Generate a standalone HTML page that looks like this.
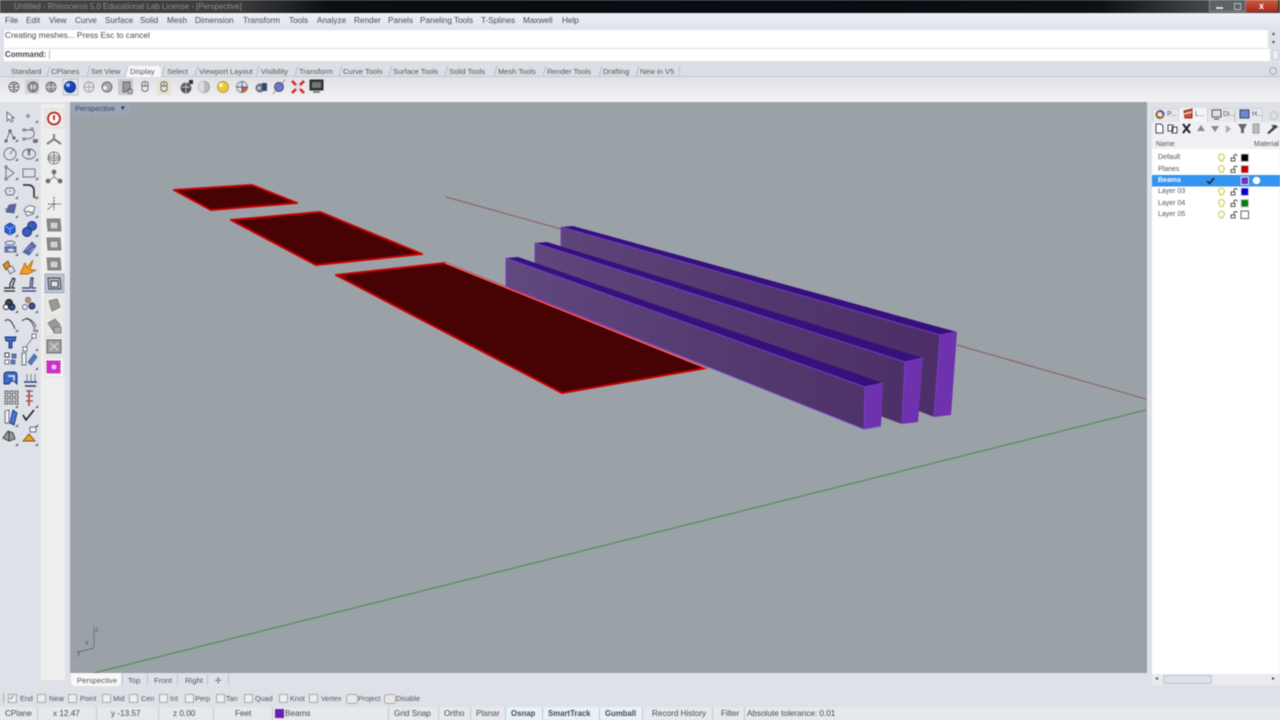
<!DOCTYPE html>
<html><head><meta charset="utf-8"><title>Rhinoceros</title>
<style>
html,body{margin:0;padding:0;width:1280px;height:720px;overflow:hidden;background:#dfe1e8}
#w{position:relative;width:1280px;height:720px;overflow:hidden;filter:blur(.45px);font-family:"Liberation Sans",sans-serif;font-size:8.2px;color:#4a4a4a;background:#dfe1e8}
#w div{position:absolute}
#w span{position:absolute;white-space:nowrap;line-height:11px}
#w .t span,#w span.t{font-size:7.5px;color:#555}
#w .o span{font-size:7.2px;color:#555}
#w .l span{font-size:7px;color:#555}
.d{width:1px;background:#c4c7ce;top:707px;height:13px}
.b{width:7px;height:7px;border:1px solid #a8a8a8;background:#eeeeee;top:694px}
.r{width:10px;height:8px;border:1px solid #a8a8a8;border-radius:3px;background:#e8e8e8;top:694px}
</style></head><body><div id="w">
<div style="left:0;top:0;width:1280px;height:13px;background:linear-gradient(90deg,#454545 0,#3c3c3c 240px,#0b0e12 330px,#080c12 800px,#0d1014 1100px,#55585c 1240px,#3a3a3a 1280px)"></div>
<span style="left:14px;top:1px;color:#8e8e8e;font-size:7.9px">Untitled - Rhinoceros 5.0 Educational Lab License - [Perspective]</span>
<div style="left:1209px;top:0;width:37px;height:12px;background:#5c6166;border:1px solid #8a8a8a;border-top:0;box-sizing:border-box"></div>
<div style="left:1246px;top:0;width:32px;height:12px;background:linear-gradient(#c85a40,#a82a1e)"></div>
<div style="left:1216px;top:7px;width:7px;height:2px;background:#ddd"></div>
<div style="left:1234px;top:3px;width:5px;height:5px;border:1px solid #bbb"></div>
<span style="left:1259px;top:1px;color:#fff;font-weight:bold;font-size:9px">x</span>

<div style="left:0;top:13px;width:1280px;height:17px;background:linear-gradient(#eef0f6,#dde1ec)"></div>
<span style="left:5px;top:15px">File</span><span style="left:26px;top:15px">Edit</span><span style="left:49px;top:15px">View</span><span style="left:75px;top:15px">Curve</span><span style="left:105px;top:15px">Surface</span><span style="left:140px;top:15px">Solid</span><span style="left:167px;top:15px">Mesh</span><span style="left:195px;top:15px">Dimension</span><span style="left:243px;top:15px">Transform</span><span style="left:289px;top:15px">Tools</span><span style="left:317px;top:15px">Analyze</span><span style="left:354px;top:15px">Render</span><span style="left:388px;top:15px">Panels</span><span style="left:420px;top:15px">Paneling Tools</span><span style="left:481px;top:15px">T-Splines</span><span style="left:523px;top:15px">Maxwell</span><span style="left:562px;top:15px">Help</span>

<div style="left:4px;top:30px;width:1264px;height:18px;background:#fff"></div>
<div style="left:4px;top:49px;width:1266px;height:12px;background:#fff"></div>
<span style="left:5px;top:30px;font-size:8.3px">Creating meshes... Press Esc to cancel</span>
<span style="left:5px;top:49px;font-weight:bold;color:#444;font-size:7.9px">Command:</span>
<div style="left:49px;top:50px;width:1px;height:9px;background:#bbb"></div>
<span style="left:1272px;top:29px;font-size:6px">▴</span><span style="left:1272px;top:38px;font-size:6px">▾</span>
<div style="left:1272px;top:50px;width:7px;height:10px;background:#eef0f6;border:1px solid #c8ccd4;box-sizing:border-box"></div>

<div style="left:0;top:63px;width:1280px;height:14px;background:#dcdee5;border-bottom:1px solid #c4c6cc;box-sizing:border-box"></div>
<div style="left:126px;top:66px;width:35px;height:11px;background:#f6f7fa;border-radius:3px 3px 0 0"></div>
<div class="t"><span style="left:11px;top:66px">Standard</span><span style="left:51px;top:66px">CPlanes</span><span style="left:91px;top:66px">Set View</span><span style="left:130px;top:66px">Display</span><span style="left:167px;top:66px">Select</span><span style="left:199px;top:66px">Viewport Layout</span><span style="left:261px;top:66px">Visibility</span><span style="left:299px;top:66px">Transform</span><span style="left:343px;top:66px">Curve Tools</span><span style="left:393px;top:66px">Surface Tools</span><span style="left:449px;top:66px">Solid Tools</span><span style="left:498px;top:66px">Mesh Tools</span><span style="left:547px;top:66px">Render Tools</span><span style="left:603px;top:66px">Drafting</span><span style="left:640px;top:66px">New in V5</span></div>
<div style="left:679px;top:66px;width:1px;height:10px;background:#c0c3c9"></div>
<div style="left:1269px;top:67px;width:8px;height:8px;border:1px solid #aaa;border-radius:50%;box-sizing:border-box"></div>

<div style="left:0;top:77px;width:1280px;height:25px;background:linear-gradient(#dfe1e6,#f3f3f5)"></div>
<div style="left:0;top:102px;width:70px;height:605px;background:#dfe1e8"></div>
<div style="left:41px;top:104px;width:24px;height:576px;background:#eeefec"></div>
<div style="left:70px;top:102px;width:1077px;height:571px;background:#9aa1a7"></div>
<div style="left:70px;top:102px;width:60px;height:13px;background:#9ba5b5"></div>
<span style="left:75px;top:103px;color:#3d4a62;font-size:7.7px">Perspective</span>
<span style="left:121px;top:103px;color:#224;font-size:7px">▾</span>

<svg style="position:absolute;left:0;top:0" width="1280" height="720" viewBox="0 0 1280 720">
<g stroke="#b9bbc2" stroke-width="1" fill="none">
<path d="M47 76L50 66M87 76L90 66M125 76L128 66M162 76L165 66M195 76L198 66M256 76L259 66M295 76L298 66M339 76L342 66M389 76L392 66M445 76L448 66M494 76L497 66M543 76L546 66M599 76L602 66M636 76L639 66"/>
</g>
<g fill="none">
<path d="M446 197L561 229M957 345L1146 399" stroke="#8d5a5c" stroke-width="1"/>
<path d="M94 673L1146 410" stroke="#4f8f55" stroke-width="1.2"/>
<path d="M94 648V627M94 648L78 652" stroke="#6d7378"/>
</g>
<text x="95" y="632" font-size="7" fill="#5a5f64" font-family="Liberation Sans">z</text><text x="85" y="645" font-size="7" fill="#5a5f64" font-family="Liberation Sans">x</text><text x="77" y="655" font-size="7" fill="#5a5f64" font-family="Liberation Sans">y</text>

<g stroke="#c80000" stroke-width="2" fill="#470203" stroke-linejoin="round">
<polygon points="174,190 252,185 297,203 211,210"/>
<polygon points="231,220 320,212 422,254 316,265"/>
</g>
<defs>
<linearGradient id="g" gradientUnits="userSpaceOnUse" x1="506" y1="0" x2="940" y2="0"><stop offset="0" stop-color="#60497f"/><stop offset=".5" stop-color="#543a6e"/><stop offset="1" stop-color="#4d2e67"/></linearGradient>
</defs>
<!-- beam 3 -->
<polygon points="561,227 940,335 934,417 561,270" fill="url(#g)"/>
<polygon points="940,335 957,332 951,415 934,417" fill="#6f32ae"/>
<polygon points="561,227 573,226 957,332 940,335" fill="#37107c"/>
<path d="M561,227L940,335L957,332M561,227V250M940,335L934,417" stroke="#7240c8" fill="none"/>
<!-- beam 2 -->
<polygon points="535,243 905,362 902,424 535,290" fill="url(#g)"/>
<polygon points="905,362 923,358 918,422 902,424" fill="#6f32ae"/>
<polygon points="535,243 547,242 923,358 905,362" fill="#37107c"/>
<path d="M535,243L905,362L923,358M535,243V262M905,362L902,424" stroke="#7240c8" fill="none"/>
<!-- beam 1 -->
<polygon points="506,258 865,387 864,429 506,286" fill="url(#g)"/>
<polygon points="865,387 883,383 881,426 864,429" fill="#6f32ae"/>
<polygon points="506,258 518,257 883,383 865,387" fill="#37107c"/>
<path d="M506,258L865,387L883,383M506,258V286L864,429L881,426M865,387L864,429" stroke="#7240c8" fill="none"/>
<polygon points="336,275 445,263 706,368 562,393" fill="#470203" stroke="#c80000" stroke-width="2" stroke-linejoin="round"/>
<path d="M445,263L706,368" stroke="#e88a90" stroke-width="1"/>

<!-- top toolbar -->
<g stroke="#666" stroke-width=".9" fill="none">
<rect x="25" y="79" width="14" height="15" fill="#d0d2d6" stroke="none"/>
<rect x="63" y="79" width="15" height="16" fill="#dfe3ee" stroke="#999" stroke-dasharray="1 1"/>
<rect x="118" y="79" width="15" height="16" fill="#c6c8cc" stroke="none"/>
<rect x="157" y="79" width="14" height="16" fill="#e6e2d2" stroke="none"/>
<circle cx="14" cy="87" r="5"/><path d="M9 87H19M14 82V92M10.500 83.500Q14 86 17.500 83.500M10.500 90.500Q14 88 17.500 90.500"/>
<circle cx="33" cy="87" r="5" fill="#999"/><circle cx="33" cy="87" r="2.500" fill="#ddd" stroke="none"/><path d="M33 82V92"/>
<circle cx="51" cy="87" r="5" fill="#aaa"/><path d="M51 82V92"/><path d="M46 87H56" stroke="#ddd"/>
<circle cx="70" cy="87" r="5.500" fill="#1446b8" stroke="#0a2a80"/><circle cx="68" cy="85" r="2" fill="#9fc0f0" stroke="none"/>
<circle cx="89" cy="87" r="5" stroke="#999" fill="#e6e6e6"/><path d="M84 87H94M89 82V92" stroke="#aaa"/>
<circle cx="107" cy="87" r="5" fill="#aaa"/><circle cx="105" cy="88" r="2" fill="#eee" stroke="none"/>
<path d="M123 82H130V90L125 92H123Z" fill="#999"/><circle cx="130" cy="91" r="2.500"/>
<path d="M142 83Q145 80 148 83V90Q145 93 142 90ZM142 86H148M145 83V86"/>
<path d="M161 83Q164 80 167 83V90Q164 93 161 90ZM161 86H167M164 83V86"/>
<circle cx="186" cy="88" r="5" fill="#555"/><path d="M182 87H190M186 83V93" stroke="#ccc"/><rect x="189" y="80" width="4" height="4" fill="#333" stroke="none"/>
<circle cx="204" cy="87" r="5.500" fill="#bbb" stroke="#999"/><path d="M204 81.500A5.500 5.500 0 0 0 204 92.500Z" fill="#ddd" stroke="none"/>
<circle cx="223" cy="87" r="5.500" fill="#e8c840" stroke="#b89820"/><circle cx="221" cy="85" r="2" fill="#fff3b0" stroke="none"/>
<circle cx="242" cy="87" r="5.500" fill="#ddd" stroke="#888"/><path d="M242 87H247.500A5.500 5.500 0 0 1 242 92.500Z" fill="#dd5a2a" stroke="none"/><path d="M236 87H248M242 81V93" stroke="#4060a0"/>
<circle cx="260" cy="88" r="4" fill="#7080a0"/><rect x="262" y="83" width="5" height="8" fill="#39486a" stroke="none"/><circle cx="259" cy="88" r="1.500" fill="#ccd" stroke="none"/>
<path d="M273 94L285 80" stroke="#888"/><circle cx="279" cy="87" r="4.500" fill="#6a78c8" stroke="#445"/>
<path d="M292 81L304 93M304 81L292 93" stroke="#e02020" stroke-width="2.500"/><circle cx="298" cy="87" r="3" fill="#dcdcdc" stroke="none"/>
<rect x="310" y="80" width="13" height="10" fill="#333" stroke="#222"/><rect x="312" y="82" width="9" height="6" fill="#777" stroke="none"/><path d="M313 92H320" stroke="#666" stroke-width="1.500"/>
</g>

<!-- left column 1 -->
<g stroke="#5e6880" stroke-width=".9" fill="none">
<path d="M7 112L7 121L9.500 119L11 122L13 121L11.500 118L14 118Z" fill="#f4f4f4"/>
<circle cx="28" cy="116" r="1.300"/>
<path d="M6 141L10 131L14 138" /><rect x="5" y="140" width="2" height="2" fill="#555"/><rect x="9" y="130" width="2" height="2" fill="#555"/><rect x="13" y="137" width="2" height="2" fill="#555"/>
<path d="M24 130H31Q35 130 34 135Q33 139 24 139" /><rect x="23" y="129" width="2" height="2" fill="#fff"/><rect x="31" y="128" width="2" height="2" fill="#fff"/><rect x="23" y="138" width="2" height="2" fill="#fff"/><rect x="33" y="139" width="4" height="4" fill="#777" stroke="none"/>
<circle cx="10" cy="154" r="6"/><path d="M10 154L14 149"/>
<ellipse cx="29" cy="154" rx="6.500" ry="5"/><circle cx="29" cy="151" r="1" fill="#555"/><circle cx="29" cy="154" r="1"/>
<path d="M6 167L14 173L6 179Z"/><rect x="5" y="166" width="2" height="2" fill="#fff"/><rect x="5" y="178" width="2" height="2" fill="#fff"/>
<rect x="23" y="169" width="12" height="8"/>
<polygon points="7,188 13,188 15,191 13,195 7,195 5,191"/><path d="M9 191H11"/>
<path d="M23 185H28Q34 185 34 191V196" stroke="#222" stroke-width="1.500"/><rect x="33" y="196" width="3" height="2" fill="#a06030" stroke="none"/>
<path d="M6 212L9 205L16 204L14 213Z" fill="#5060c0"/><path d="M9 205L11 212M5 209H15"/>
<path d="M24 210Q28 203 35 207L33 214L27 216Z" fill="#f0f0f4"/><path d="M26 211L33 213" stroke="#333"/>
<path d="M5 226L10 223L15 226V232L10 235L5 232Z" fill="#2a5fd8" stroke="#1a3a90"/><path d="M5 226L10 229L15 226M10 229V235" stroke="#8fb0ee"/>
<circle cx="32" cy="226" r="4.500" fill="#3a5cc0" stroke="#1a2a70"/><circle cx="27" cy="232" r="4.500" fill="#3a5cc0" stroke="#1a2a70"/>
<ellipse cx="10" cy="243" rx="5" ry="2"/><path d="M5 246V252H16V246M7 247Q11 250 15 247" fill="#5878d8"/><ellipse cx="11" cy="250" rx="4" ry="2" fill="#d0d8f0"/>
<path d="M23 252L32 242L36 246L29 255Z" fill="#4a62b8"/><path d="M26 250L33 245M29 252L34 248" stroke="#99a8dc"/>
<path d="M3 265L8 261L10 266L6 270Z" fill="#d8951e" stroke="#7a5010"/><path d="M7 268L12 266L15 271L10 274Z" fill="#ddd"/>
<path d="M20 274L25 263L27 268L33 260L30 270L36 270L28 274Z" fill="#f0a020" stroke="#c06010"/>
<path d="M4 288H10V284L13 278L15 279L12 288H15M4 291H15" stroke="#222" stroke-width="1.200"/>
<path d="M22 288H30L31 278H33L32 288H36M22 291H36" stroke="#2a3a6a" stroke-width="1.200"/>
<circle cx="9" cy="303" r="3.500" fill="#444" stroke="#111"/><circle cx="6" cy="307" r="2.500" fill="#fff" stroke="#111"/><circle cx="12" cy="307" r="3" fill="#3050b0" stroke="#111"/>
<circle cx="28" cy="300" r="2.500" fill="#d89040"/><circle cx="25" cy="307" r="2.500" fill="#e8e8e8"/><circle cx="32" cy="306" r="3" fill="#3a50a0" stroke="#222"/>
<path d="M5 321Q10 316 15 329" stroke="#222"/>
<path d="M22 321Q30 314 35 330M26 318Q34 320 36 327" stroke="#444"/><rect x="33" y="329" width="3" height="3" fill="#999" stroke="none"/>
<path d="M5 337H16L15 341H12L12 348H9L9 341H6Z" fill="#3c6ac8" stroke="#183070"/>
<path d="M24 349L35 335" stroke="#777"/><rect x="23" y="347" width="4" height="4" fill="#fff"/><rect x="32" y="334" width="4" height="4" fill="#fff"/>
<rect x="5" y="353" width="4" height="4" fill="#fff" stroke="#333"/><rect x="11" y="360" width="4" height="4" fill="#4a78d0"/><rect x="5" y="360" width="4" height="4" fill="#fff"/><rect x="12" y="354" width="4" height="4" fill="#4a78d0"/>
<path d="M22 353V365H26V353Z" fill="#f0f0f0"/><path d="M28 362L34 354L37 357L31 365Z" fill="#4a78d0"/>
<path d="M4 384V375Q4 372 8 372H14Q17 372 17 375V384Q12 378 9 384Z" fill="#3c6ac8" stroke="#183070"/><path d="M8 376H14V381" stroke="#e8eaf8" stroke-width="1.500"/>
<path d="M24 382H37M25 386H36" stroke="#2a3a80" stroke-width="1.500"/><path d="M27 374V382M31 374V382M35 374V382" stroke="#777"/>
<g stroke="#555"><rect x="5" y="391" width="3" height="3"/><rect x="10" y="391" width="3" height="3"/><rect x="15" y="391" width="3" height="3"/><rect x="5" y="396" width="3" height="3"/><rect x="10" y="396" width="3" height="3"/><rect x="15" y="396" width="3" height="3"/><rect x="5" y="401" width="3" height="3"/><rect x="10" y="401" width="3" height="3"/><rect x="15" y="401" width="3" height="3"/></g>
<path d="M26 391H33M26 396H33M26 401H33" stroke="#777" stroke-width="1.500"/><path d="M29 390V406" stroke="#c83030" stroke-width="1.500"/>
<path d="M5 411L9 410V423L5 423Z" fill="#f0f0f0"/><path d="M10 423L13 410L17 413L14 425Z" fill="#4a78d0" stroke="#183070"/>
<path d="M23 415L26 420L34 410" stroke="#111" stroke-width="1.500"/>
<path d="M3 438L8 431L13 433L15 439L9 441Z" fill="#9a9a9a" stroke="#333"/><path d="M9 431V441" stroke="#333"/>
<path d="M23 441L29 434L35 441Z" fill="#e8a020" stroke="#805010"/><rect x="30" y="427" width="6" height="5" fill="#eee"/>
</g>
<g fill="#666">
<path d="M38 123h-3l3-3zM38 142h-3l3-3zM18 142h-3l3-3zM18 161h-3l3-3zM38 161h-3l3-3zM18 180h-3l3-3zM38 180h-3l3-3zM18 199h-3l3-3zM38 199h-3l3-3zM18 218h-3l3-3zM38 218h-3l3-3zM18 237h-3l3-3zM38 237h-3l3-3zM18 256h-3l3-3zM38 256h-3l3-3zM18 313h-3l3-3zM38 313h-3l3-3zM18 332h-3l3-3zM38 332h-3l3-3zM38 351h-3l3-3zM38 370h-3l3-3zM18 408h-3l3-3zM38 408h-3l3-3zM18 427h-3l3-3zM38 427h-3l3-3zM18 446h-3l3-3zM38 446h-3l3-3z"/>
</g>

<!-- left column 2 -->
<g fill="none" stroke="#808080">
<rect x="45" y="109" width="19" height="19" fill="#f3e8e6" stroke="#ddd"/>
<circle cx="54" cy="118.500" r="6" stroke="#b02a2a" stroke-width="1.800" fill="#fbf4f2"/><path d="M54 115V120" stroke="#b02a2a" stroke-width="1.800"/>
<path d="M54 139V134M54 139L47 144M54 139L61 144" stroke-width="2"/>
<circle cx="54" cy="158" r="6"/><ellipse cx="54" cy="158" rx="6" ry="2.500"/><path d="M48 158H60M54 152V164"/>
<path d="M54 177V172M54 177L48 181M54 177L60 181"/><circle cx="54" cy="172" r="2" fill="#666"/><circle cx="48" cy="181" r="2" fill="#666"/><circle cx="60" cy="181" r="2" fill="#666"/>
<path d="M54 197V210M48 204H61M54 204L47 210" stroke-dasharray="2 1" stroke="#555"/>
<path d="M47 219H60L61 231H48Z" fill="#8a8a8a"/><path d="M50 222H58V229H50Z" fill="#cfcfcf"/>
<path d="M47 238H60L61 250H48Z" fill="#8a8a8a"/><path d="M50 241H58V248H50Z" fill="#cfcfcf"/>
<path d="M47 258H60L61 270H48Z" fill="#8a8a8a"/><path d="M50 261H58V268H50Z" fill="#cfcfcf"/>
<rect x="45" y="274" width="19" height="19" fill="#b7c3d6" stroke="#aab"/>
<path d="M48 278H60L61 289H49Z" fill="#b0b8c0" stroke="#444"/><path d="M51 281H58V287H51Z" fill="#dde2e8" stroke="#444"/>
<rect x="45" y="296" width="19" height="19" fill="#e9e9e6" stroke="#ddd"/>
<path d="M49 301L57 299L60 307L52 311Z" fill="#9a9a9a"/>
<rect x="45" y="317" width="19" height="19" fill="#e9e9e6" stroke="#ddd"/>
<path d="M48 323L55 319L60 325L54 332Z" fill="#999"/><path d="M54 327H61V333H54Z" fill="#aaa"/>
<rect x="45" y="337" width="19" height="19" fill="#e9e9e6" stroke="#ddd"/>
<rect x="47" y="340" width="14" height="13" fill="#a0a0a0" stroke="#666"/><path d="M50 343L58 350M58 343L50 350" stroke="#ddd"/>
<rect x="45" y="358" width="19" height="19" fill="#f4f0f4" stroke="#ddd"/>
<path d="M47 361H60V373H47Z" fill="#d030c8" stroke="#a020a0" stroke-dasharray="2 1"/><circle cx="54" cy="367" r="2.500" fill="#f6c6f4" stroke="none"/>
</g>
</svg>

<!-- right panel -->
<div style="left:1147px;top:102px;width:133px;height:578px;background:#dfe1e8"></div>
<div style="left:1152px;top:137px;width:128px;height:537px;background:#fff"></div>
<div style="left:1152px;top:137px;width:128px;height:12px;background:#f0f1f3"></div>
<div style="left:1152px;top:108px;width:27px;height:14px;background:#e6e8ee;border:1px solid #cfd1d8;border-bottom:0;box-sizing:border-box;border-radius:3px 3px 0 0"></div>
<div style="left:1179px;top:108px;width:28px;height:14px;background:#f4f4f6;border-radius:3px 3px 0 0"></div>
<div style="left:1207px;top:108px;width:28px;height:14px;background:#e6e8ee;border:1px solid #cfd1d8;border-bottom:0;box-sizing:border-box;border-radius:3px 3px 0 0"></div>
<div style="left:1235px;top:108px;width:28px;height:14px;background:#e6e8ee;border:1px solid #cfd1d8;border-bottom:0;box-sizing:border-box;border-radius:3px 3px 0 0"></div>
<div style="left:1152px;top:122px;width:128px;height:15px;background:#eff0f4"></div>
<svg style="position:absolute;left:0;top:0" width="1280" height="720" viewBox="0 0 1280 720">
<g fill="none" stroke="#444">
<circle cx="1160" cy="114.500" r="3.500" stroke="#c05020" stroke-width="2"/><path d="M1160 111A3.500 3.500 0 0 1 1163.500 114.500" stroke="#3050c0" stroke-width="2"/><path d="M1157 116A3.500 3.500 0 0 0 1160 118" stroke="#2a9040" stroke-width="2"/>
<path d="M1184 111L1192 109V118L1185 118Z" fill="#d05030" stroke="#803020"/><path d="M1184 114L1192 112" stroke="#fff"/>
<rect x="1212" y="110" width="9" height="7" fill="#e0e0e0" stroke="#555"/><path d="M1214 119H1219"/>
<rect x="1240" y="110" width="9" height="8" fill="#6a8ad0" stroke="#345"/>
<circle cx="1274" cy="115.500" r="3.800" stroke="#bbb"/>
<path d="M1156 124H1161L1163 126V133H1156Z" fill="#fff"/>
<path d="M1168 125H1173V131H1168ZM1172 127H1177V133H1172Z" fill="#fff"/>
<path d="M1183 124L1190 133M1190 124L1183 133" stroke="#222" stroke-width="2"/>
<path d="M1197 131L1201 125L1205 131Z" fill="#888" stroke="none"/>
<path d="M1211 126L1215 132L1219 126Z" fill="#888" stroke="none"/>
<path d="M1231 129L1226 125V133Z" fill="#aaa" stroke="none"/>
<path d="M1238 124H1247L1244 129V133H1241V129Z" fill="#666" stroke="none"/>
<rect x="1253" y="124" width="6" height="9" fill="#bbb" stroke="#999"/>
<path d="M1267 133L1273 127L1271 125L1276 125L1278 127L1275 129L1269 134Z" fill="#444" stroke="none"/>
<rect x="1152" y="175" width="128" height="11.500" fill="#3494ee" stroke="none"/>
<g stroke="#c8c860" fill="#fdfde8">
<path d="M1221 154a3 3 0 0 1 2 5.500V161H1220V159.500a3 3 0 0 1 1-5.500Z"/>
<path d="M1221 165.500a3 3 0 0 1 2 5.500V172.500H1220V171a3 3 0 0 1 1-5.500Z"/>
<path d="M1221 188a3 3 0 0 1 2 5.500V195H1220V193.500a3 3 0 0 1 1-5.500Z"/>
<path d="M1221 199.500a3 3 0 0 1 2 5.500V206.500H1220V205a3 3 0 0 1 1-5.500Z"/>
<path d="M1221 211a3 3 0 0 1 2 5.500V218H1220V216.500a3 3 0 0 1 1-5.500Z"/>
</g>
<g stroke="#555" fill="#fff">
<path d="M1231 158h4v3h-4zM1234 158v-2a1.500 1.500 0 0 1 3 0"/>
<path d="M1231 169.500h4v3h-4zM1234 169.500v-2a1.500 1.500 0 0 1 3 0"/>
<path d="M1231 192h4v3h-4zM1234 192v-2a1.500 1.500 0 0 1 3 0"/>
<path d="M1231 203.500h4v3h-4zM1234 203.500v-2a1.500 1.500 0 0 1 3 0"/>
<path d="M1231 215h4v3h-4zM1234 215v-2a1.500 1.500 0 0 1 3 0"/>
</g>
<rect x="1241" y="154" width="7.500" height="7.500" fill="#000" stroke="#ccc"/>
<rect x="1241" y="165.500" width="7.500" height="7.500" fill="#c00000" stroke="#ccc"/>
<rect x="1241" y="177" width="7.500" height="7.500" fill="#7030c0" stroke="#ddd"/>
<circle cx="1256.500" cy="180.500" r="3.800" fill="#fff" stroke="none"/>
<rect x="1241" y="188" width="7.500" height="7.500" fill="#0000d0" stroke="#ccc"/>
<rect x="1241" y="199.500" width="7.500" height="7.500" fill="#0a7a10" stroke="#ccc"/>
<rect x="1241" y="211" width="7.500" height="7.500" fill="#fff" stroke="#666"/>
<path d="M1207 181L1209.500 183.500L1214 178" stroke="#222" stroke-width="1.500"/>
</g>
</svg>
<div class="l">
<span style="left:1167px;top:109px">P...</span><span style="left:1195px;top:109px">L...</span><span style="left:1223px;top:109px">Di...</span><span style="left:1252px;top:109px">H...</span>
<span style="left:1156px;top:139px">Name</span><span style="left:1254px;top:139px">Material</span>
<span style="left:1158px;top:152px">Default</span>
<span style="left:1158px;top:164px">Planes</span>
<span style="left:1158px;top:175px;color:#fff;font-weight:bold">Beams</span>
<span style="left:1158px;top:186px">Layer 03</span>
<span style="left:1158px;top:198px">Layer 04</span>
<span style="left:1158px;top:209px">Layer 05</span>
</div>

<div style="left:1152px;top:674px;width:128px;height:11px;background:#e9ebf0"></div>
<div style="left:1163px;top:675px;width:49px;height:9px;background:#dde0e8;border:1px solid #bcc0c8;box-sizing:border-box;border-radius:2px"></div>
<span style="left:1155px;top:674px;font-size:6px">◂</span><span style="left:1272px;top:674px;font-size:6px">▸</span>

<!-- viewport tabs -->
<div style="left:71px;top:673px;width:50px;height:13px;background:#f8f8f8;border-radius:0 0 4px 4px"></div>
<div class="t"><span style="left:77px;top:675px;font-size:7.7px">Perspective</span>
<span style="left:128px;top:675px;font-size:7.7px">Top</span><span style="left:154px;top:675px;font-size:7.7px">Front</span><span style="left:185px;top:675px;font-size:7.7px">Right</span><span style="left:215px;top:675px;font-size:7.7px">✢</span></div>
<div style="left:122px;top:674px;width:1px;height:11px;background:#c0c3c9"></div>
<div style="left:147px;top:674px;width:1px;height:11px;background:#c0c3c9"></div>
<div style="left:177px;top:674px;width:1px;height:11px;background:#c0c3c9"></div>
<div style="left:207px;top:674px;width:1px;height:11px;background:#c0c3c9"></div>
<div style="left:228px;top:674px;width:1px;height:11px;background:#c0c3c9"></div>

<!-- osnap -->
<div style="left:0;top:686px;width:1280px;height:21px;background:#dfe1e8"></div>
<div style="left:0;top:707px;width:1280px;height:13px;background:#e6e8ed"></div>
<div style="left:3px;top:693px;width:1px;height:10px;background:#aab"></div>
<div class="o">
<div class="b" style="left:8px"></div><span style="left:9px;top:692px;color:#555">✓</span><span style="left:20px;top:693px">End</span>
<div class="b" style="left:37px"></div><span style="left:49px;top:693px">Near</span>
<div class="b" style="left:68px"></div><span style="left:80px;top:693px">Point</span>
<div class="b" style="left:102px"></div><span style="left:113px;top:693px">Mid</span>
<div class="b" style="left:129px"></div><span style="left:141px;top:693px">Cen</span>
<div class="b" style="left:159px"></div><span style="left:170px;top:693px">Int</span>
<div class="b" style="left:185px"></div><span style="left:195px;top:693px">Perp</span>
<div class="b" style="left:216px"></div><span style="left:226px;top:693px">Tan</span>
<div class="b" style="left:244px"></div><span style="left:255px;top:693px">Quad</span>
<div class="b" style="left:279px"></div><span style="left:290px;top:693px">Knot</span>
<div class="b" style="left:309px"></div><span style="left:321px;top:693px">Vertex</span>
<div class="r" style="left:346px"></div><span style="left:358px;top:693px">Project</span>
<div class="r" style="left:384px"></div><span style="left:396px;top:693px">Disable</span>
</div>

<!-- status -->
<div style="left:505px;top:707px;width:137px;height:13px;background:#e6f1f8"></div>
<div class="d" style="left:37px"></div><div class="d" style="left:96px"></div><div class="d" style="left:158px"></div><div class="d" style="left:213px"></div><div class="d" style="left:272px"></div><div class="d" style="left:388px"></div><div class="d" style="left:438px"></div><div class="d" style="left:470px"></div><div class="d" style="left:505px"></div><div class="d" style="left:542px"></div><div class="d" style="left:599px"></div><div class="d" style="left:642px"></div><div class="d" style="left:712px"></div><div class="d" style="left:744px"></div>
<div style="left:275px;top:709px;width:9px;height:9px;background:#6a1fb4"></div>
<span style="left:5px;top:708px">CPlane</span><span style="left:53px;top:708px">x 12.47</span><span style="left:111px;top:708px">y -13.57</span><span style="left:173px;top:708px">z 0.00</span><span style="left:235px;top:708px">Feet</span><span style="left:285px;top:708px">Beams</span>
<span style="left:394px;top:708px">Grid Snap</span><span style="left:444px;top:708px">Ortho</span><span style="left:476px;top:708px">Planar</span><span style="left:511px;top:708px;font-weight:bold;font-size:7.8px">Osnap</span><span style="left:548px;top:708px;font-weight:bold;font-size:7.8px">SmartTrack</span><span style="left:605px;top:708px;font-weight:bold;font-size:7.8px">Gumball</span><span style="left:652px;top:708px">Record History</span><span style="left:721px;top:708px">Filter</span><span style="left:747px;top:708px">Absolute tolerance: 0.01</span>
</div></body></html>
